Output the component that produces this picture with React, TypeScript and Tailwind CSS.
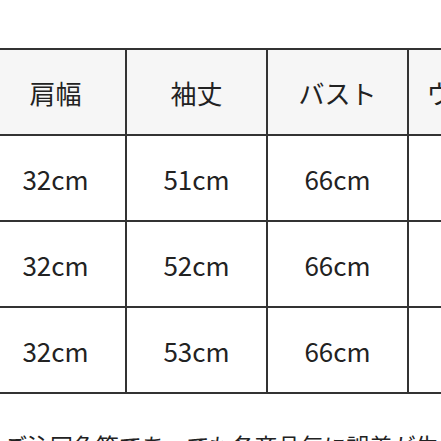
const header = ["着丈", "肩幅", "袖丈", "バスト", "ウエスト"];
const rows = [
  ["64cm", "32cm", "51cm", "66cm", "62cm"],
  ["66cm", "32cm", "52cm", "66cm", "62cm"],
  ["68cm", "32cm", "53cm", "66cm", "62cm"],
];

export default function App() {
  return (
    <div
      className="w-[441px] h-[441px] overflow-hidden bg-white text-[#222]"
      style={{ fontFamily: '"Noto Sans CJK JP", "Noto Sans", sans-serif' }}
    >
      <div className="pt-[48px] ml-[-155px]">
        <div className="flex h-[88px] bg-[#f6f6f6] border-y-2 border-[#333]">
          {header.map((h, i) => (
            <div
              key={i}
              className="w-[141px] shrink-0 flex items-center justify-center border-r-2 border-[#333] text-[26px]"
            >
              {h}
            </div>
          ))}
        </div>
        {rows.map((r, ri) => (
          <div key={ri} className="flex h-[86px] border-b-2 border-[#333]">
            {r.map((c, ci) => (
              <div
                key={ci}
                className="w-[141px] shrink-0 flex items-center justify-center border-r-2 border-[#333] text-[26px]"
              >
                {c}
              </div>
            ))}
          </div>
        ))}
      </div>
      <p className="mt-[40px] ml-[4px] whitespace-nowrap text-[23px] leading-none">
        ご注同色等であっても各商品毎に誤差が生じます
      </p>
    </div>
  );
}
